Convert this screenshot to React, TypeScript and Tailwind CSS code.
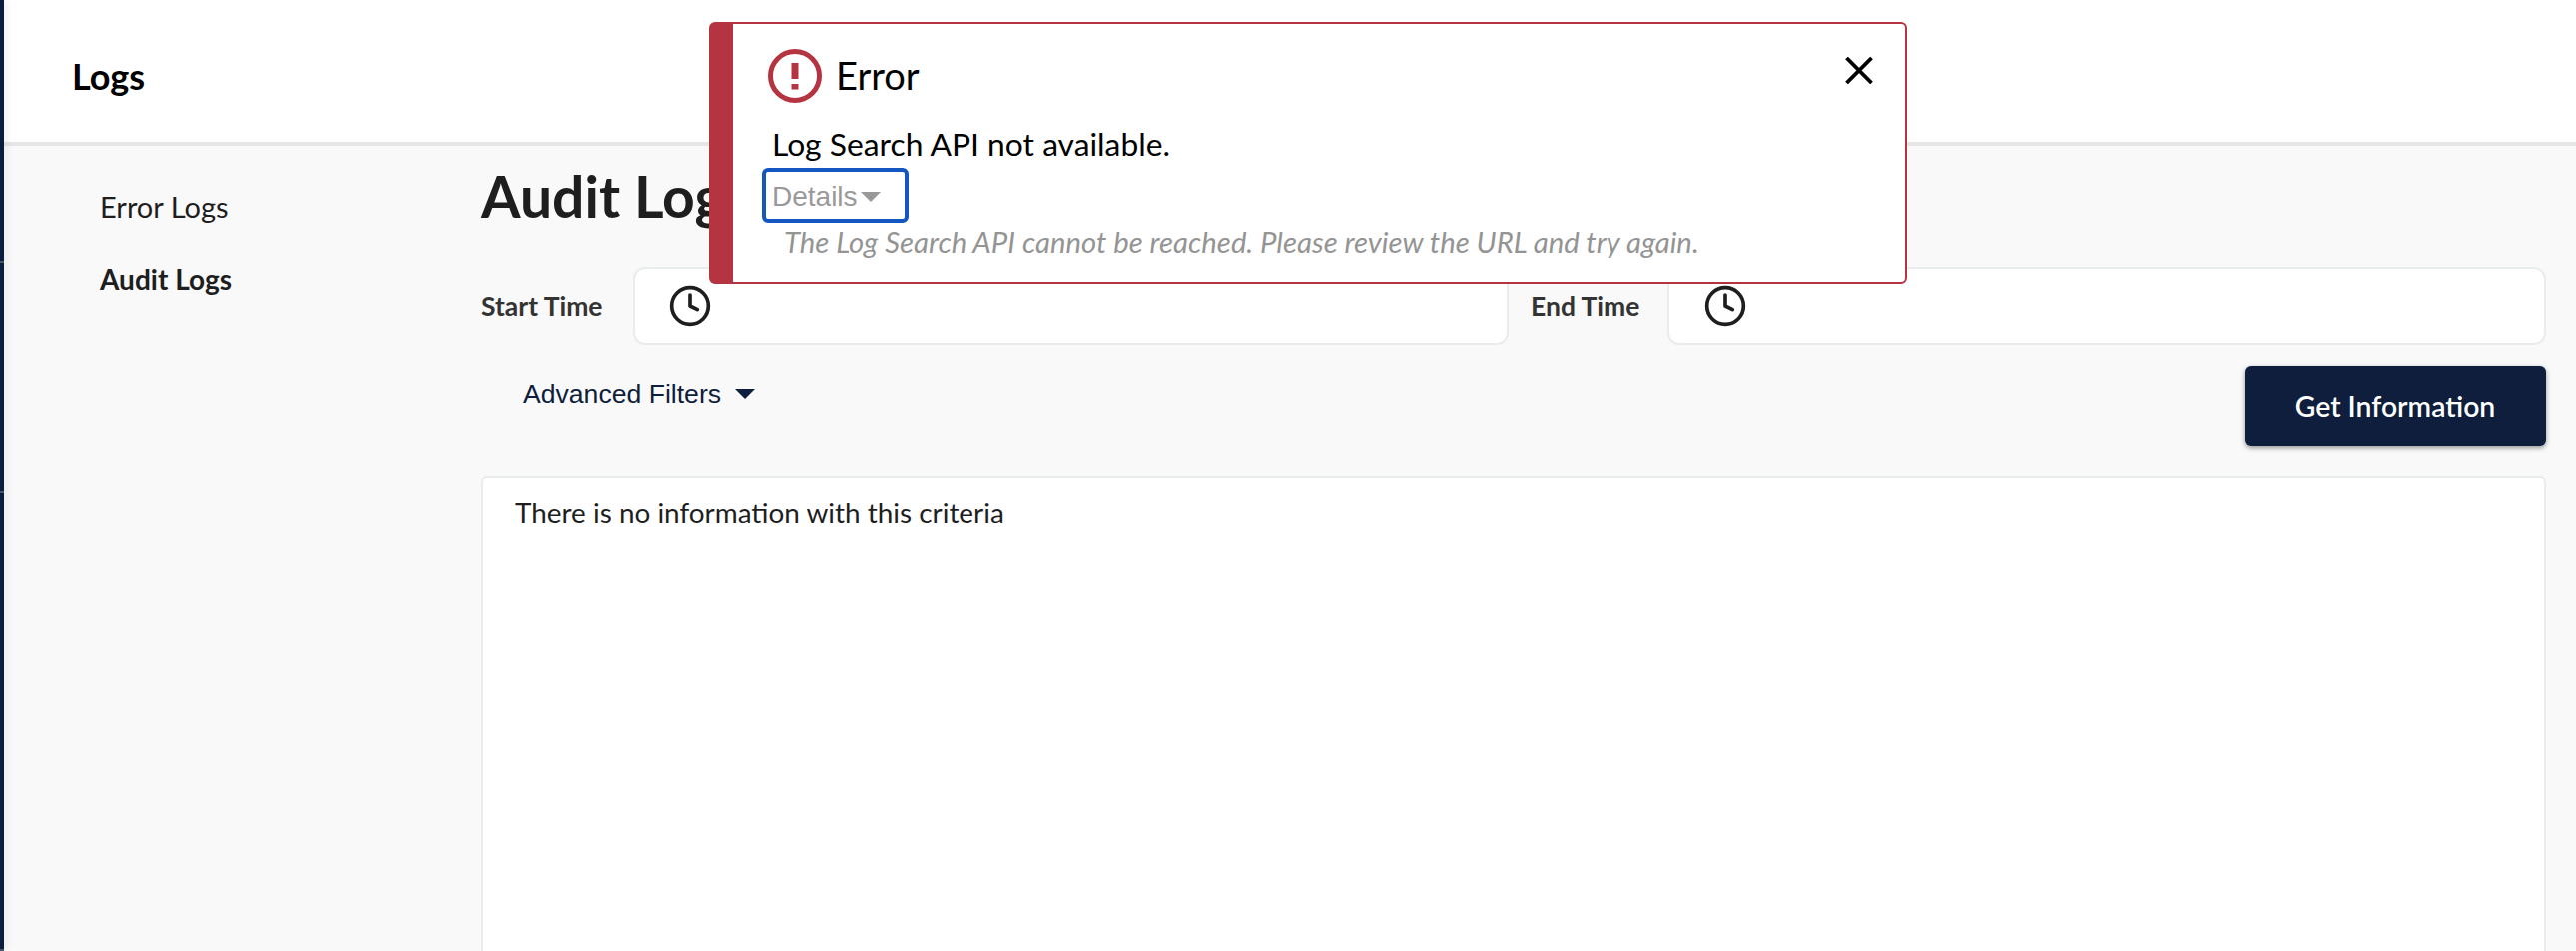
import { Clock } from 'lucide-react'

const lato = "font-['Lato',sans-serif]"
const arial = "font-['Liberation_Sans',Arial,sans-serif]"

function Caret({ className }: { className: string }) {
  return (
    <svg viewBox="0 0 20 10" className={className} fill="currentColor" aria-hidden="true">
      <path d="M0 0h20L10 10z" />
    </svg>
  )
}

function TimeField({ label, labelWidth, className }: { label: string; labelWidth: string; className: string }) {
  return (
    <>
      <span className={`${labelWidth} shrink-0 text-[26.5px] leading-[32px] font-bold text-[#333333] whitespace-nowrap`}>{label}</span>
      <div className={`h-[78px] bg-white border-2 border-[#e8ecec] rounded-[12px] flex items-center ${className}`}>
        <Clock size={44} strokeWidth={2} className="text-[#1e1e1e]" />
      </div>
    </>
  )
}

function ErrorToast() {
  return (
    <div className="absolute z-20 left-[710px] top-[22px] w-[1200px] h-[262px] bg-white border-2 border-l-[24px] border-[#b53441] rounded-[6px] pl-[35px] pt-[25px]">
      <button className="absolute right-[32px] top-[33px] text-black" aria-label="Close">
        <svg width="28" height="27" viewBox="0 0 28 27" fill="none" stroke="currentColor" strokeWidth="3.8">
          <path d="M1.5 1 26.5 26M26.5 1 1.5 26" />
        </svg>
      </button>

      <div className="flex items-center gap-[14px] h-[54px]">
        <svg width="54" height="54" viewBox="0 0 54 54" className="text-[#b53441]" aria-hidden="true">
          <circle cx="27" cy="27" r="24.5" fill="none" stroke="currentColor" strokeWidth="5" />
          <rect x="23.5" y="14" width="7" height="16" fill="currentColor" />
          <rect x="23.5" y="35" width="7" height="5.5" fill="currentColor" />
        </svg>
        <span className="text-[38px] leading-[54px] -mt-[3px] text-black">Error</span>
      </div>

      <p className="mt-[21px] ml-[4px] text-[31.8px] leading-[40px] text-black">Log Search API not available.</p>

      <button className={`${arial} mt-[4px] -ml-[6px] w-[147px] h-[55px] flex items-center border-[4px] border-[#1557c0] rounded-[6px] pl-[6px] pt-[2px] text-[28px] text-[#999999]`}>
        Details
        <Caret className="w-[20px] h-[10px] ml-[3px]" />
      </button>

      <p className="mt-[1px] ml-[16px] text-[29.3px] leading-[36px] italic text-[#949494] whitespace-nowrap">
        The Log Search API cannot be reached. Please review the URL and try again.
      </p>
    </div>
  )
}

export default function App() {
  return (
    <div className={`${lato} relative flex h-[952px] overflow-hidden bg-white`}>
      {/* collapsed side rail, only its edge is on screen */}
      <div className="relative z-10 w-[4px] shrink-0 flex flex-col shadow-[2px_0_8px_rgba(0,0,0,0.1)] bg-[#0a1d3e]">
        <div className="mt-[261px] h-[2px] bg-[#4a5568]" />
        <div className="mt-[229px] h-[2px] bg-[#4a5568]" />
        <div className="mt-auto h-[2px] bg-[#4a5568]" />
      </div>

      <div className="flex-1 flex flex-col min-w-0">
        <header className="h-[146px] shrink-0 bg-white border-b-4 border-[#e6e6e6] pl-[68px] pt-[55px]">
          <h2 className="text-[36px] font-bold text-black leading-[42px]">Logs</h2>
        </header>

        <div className="flex-1 flex min-h-0 bg-[#f9f9f9]">
          <nav className="w-[478px] shrink-0 pl-[96px] pt-[41px] flex flex-col gap-[32px] text-[28px] leading-[40px] text-[#1e1e1e]">
            <a className="text-[29px]">Error Logs</a>
            <a className="font-bold">Audit Logs</a>
          </nav>

          <main className="flex-1 min-w-0 pr-[30px] pt-[20px] flex flex-col">
            <h1 className="text-[57px] leading-[60px] font-bold text-[#1e1e1e]">Audit Logs</h1>

            <div className="mt-[41px] flex items-center">
              <TimeField label="Start Time" labelWidth="w-[152px]" className="w-[877px] pl-[33px]" />
              <div className="w-[22px] shrink-0" />
              <TimeField label="End Time" labelWidth="w-[137px]" className="flex-1 pl-[34px]" />
            </div>

            <div className="mt-[21px] flex justify-between items-start">
              <button className={`${arial} mt-[12px] ml-[42px] flex items-center text-[26.6px] leading-[32px] text-[#0e1e3c]`}>
                Advanced Filters
                <Caret className="w-[20px] h-[10px] ml-[14px]" />
              </button>
              <button className="w-[302px] h-[80px] rounded-[6px] bg-[#0e1e3c] text-white text-[28.4px] font-semibold shadow-[0_2px_5px_rgba(0,0,0,0.4)]">
                Get Information
              </button>
            </div>

            <section className="mt-[31px] -mb-[20px] flex-1 bg-white border-2 border-[#e8ecec] rounded-[6px] pl-[32px] pt-[14px]">
              <p className="text-[27.9px] leading-[40px] text-[#1e1e1e]">There is no information with this criteria</p>
            </section>
          </main>
        </div>
      </div>

      <ErrorToast />
    </div>
  )
}
